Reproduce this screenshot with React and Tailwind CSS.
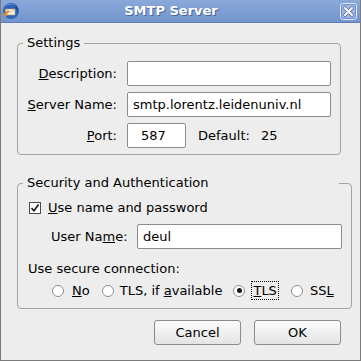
import React from "react";

function BirdIcon() {
    return (
        <svg width="18" height="18" viewBox="0 0 18 18">
            <circle cx="9" cy="9" r="8" fill="#2f64b5" />
            <path d="M3 4 Q9 0 15 4 Q13 2 9 2.5 Q5 3 3 4 Z" fill="#8fb8ec" />
            <path d="M3.5 7 L13 7 L13 13 L3.5 13 Z" fill="#f4efe2" stroke="#b49a62" strokeWidth="0.6" />
            <path d="M3.5 7 L8.2 10.5 L13 7" fill="none" stroke="#b49a62" strokeWidth="0.6" />
            <path d="M1.5 12 Q5 8 8 9 Q5 11 4 15 Q2 14 1.5 12 Z" fill="#e58a22" />
            <path d="M14 4 Q17 8 15 13 Q16 8 13 5 Z" fill="#1b3f80" />
        </svg>
    );
}

function CloseIcon() {
    return (
        <svg width="17" height="17" viewBox="0 0 17 17">
            <rect x="0.5" y="0.5" width="16" height="16" rx="3" fill="#9db6e2" stroke="#e4ecf8" />
            <rect x="1.5" y="1.5" width="14" height="14" rx="2" fill="none" stroke="#6f8cc4" />
            <path d="M5 5 L12 12 M12 5 L5 12" stroke="#4f6a9c" strokeWidth="3.4" strokeLinecap="round" />
            <path d="M5 5 L12 12 M12 5 L5 12" stroke="#ffffff" strokeWidth="2" strokeLinecap="round" />
        </svg>
    );
}

function Radio({ checked }) {
    return (
        <span className="shrink-0 w-[12px] h-[12px] rounded-full border border-[#8e8e8e] bg-white flex items-center justify-center">
            {checked && <span className="w-[5px] h-[5px] rounded-full bg-[#1a1a1a]" />}
        </span>
    );
}

function Field({ value, className }) {
    return (
        <div className={"h-[25px] bg-white border border-[#8c8c8c] rounded-[2px] flex items-center pl-[5px] " + className}>
            {value}
        </div>
    );
}

export default function App() {
    return (
        <div
            className="w-[361px] h-[361px] bg-[#ededed] border-x border-b border-[#7b7b7b] flex flex-col text-[13px] leading-[16px] text-black"
            style={{ fontFamily: '"DejaVu Sans", sans-serif' }}
        >
            {/* title bar */}
            <div className="h-[23px] bg-gradient-to-b from-[#8ba8da] to-[#7394cc] border-b border-[#5f7db4] flex items-center px-[1px] relative">
                <BirdIcon />
                <span className="flex-1 text-center font-bold text-white [text-shadow:1px_1px_0_#4a6699] -ml-[18px]">SMTP Server</span>
                <div className="mr-[2px]"><CloseIcon /></div>
            </div>

            <div className="pl-[16px] pr-[19px] pt-[12px]">
                {/* Settings */}
                <fieldset className="border border-[#a3a3a3] rounded-[4px] pr-[9px] pb-[6px]">
                    <legend className="ml-[5px] px-[4px]">Settings</legend>
                    <div className="grid grid-cols-[99px_1fr] gap-x-[10px] gap-y-[6px] items-center mt-[10px]">
                        <span className="text-right"><u>D</u>escription:</span>
                        <Field value="" />
                        <span className="text-right"><u>S</u>erver Name:</span>
                        <Field value="smtp.lorentz.leidenuniv.nl" />
                        <span className="text-right"><u>P</u>ort:</span>
                        <div className="flex items-center">
                            <Field value="587" className="w-[59px] pl-[13px]" />
                            <span className="ml-[12px]">Default:</span>
                            <span className="ml-[11px]">25</span>
                        </div>
                    </div>
                </fieldset>

                {/* Security */}
                <fieldset className="border border-[#a3a3a3] rounded-[4px] mt-[20px] pr-[9px] pb-[8px]">
                    <legend className="ml-[5px] px-[4px] w-[316px] bg-[#ededed]">Security and Authentication</legend>
                    <div className="flex items-center mt-[9px] ml-[11px]">
                        <span className="w-[12px] h-[12px] border border-[#4a4a4a] bg-white flex items-center justify-center">
                            <svg width="10" height="10" viewBox="0 0 10 10">
                                <path d="M1.5 5 L4 7.8 L8.5 1.5" fill="none" stroke="#111" strokeWidth="1.5" />
                            </svg>
                        </span>
                        <span className="ml-[7px]"><u>U</u>se name and password</span>
                    </div>
                    <div className="flex items-center mt-[8px] ml-[33px]">
                        <span className="w-[86px]">User Na<u>m</u>e:</span>
                        <Field value="deul" className="flex-1" />
                    </div>
                    <div className="mt-[12px] ml-[10px]">Use secure connection:</div>
                    <div className="flex items-center mt-[4px] ml-[34px] h-[19px] whitespace-nowrap w-[290px]">
                        <Radio />
                        <span className="shrink-0 ml-[7px] px-[1px]"><u>N</u>o</span>
                        <span className="shrink-0 ml-[11px]"><Radio /></span>
                        <span className="shrink-0 ml-[5px] px-[1px]">TLS, if <u>a</u>vailable</span>
                        <span className="shrink-0 ml-[10px]"><Radio checked /></span>
                        <span className="shrink-0 ml-[6px] px-[1px] h-[19px] flex items-center border border-dotted border-black"><u>T</u>LS</span>
                        <span className="shrink-0 ml-[12px]"><Radio /></span>
                        <span className="shrink-0 ml-[6px] px-[1px]">SS<u>L</u></span>
                    </div>
                </fieldset>

                {/* buttons */}
                <div className="flex justify-end gap-[13px] mt-[11px]">
                    <button className="w-[87px] h-[25px] font-normal border border-[#8b8b8b] rounded-[3px] bg-gradient-to-b from-[#fbfbfb] to-[#e4e4e4]">Cancel</button>
                    <button className="w-[87px] h-[25px] font-normal border border-[#8b8b8b] rounded-[3px] bg-gradient-to-b from-[#fbfbfb] to-[#e4e4e4]">OK</button>
                </div>
            </div>
        </div>
    );
}
